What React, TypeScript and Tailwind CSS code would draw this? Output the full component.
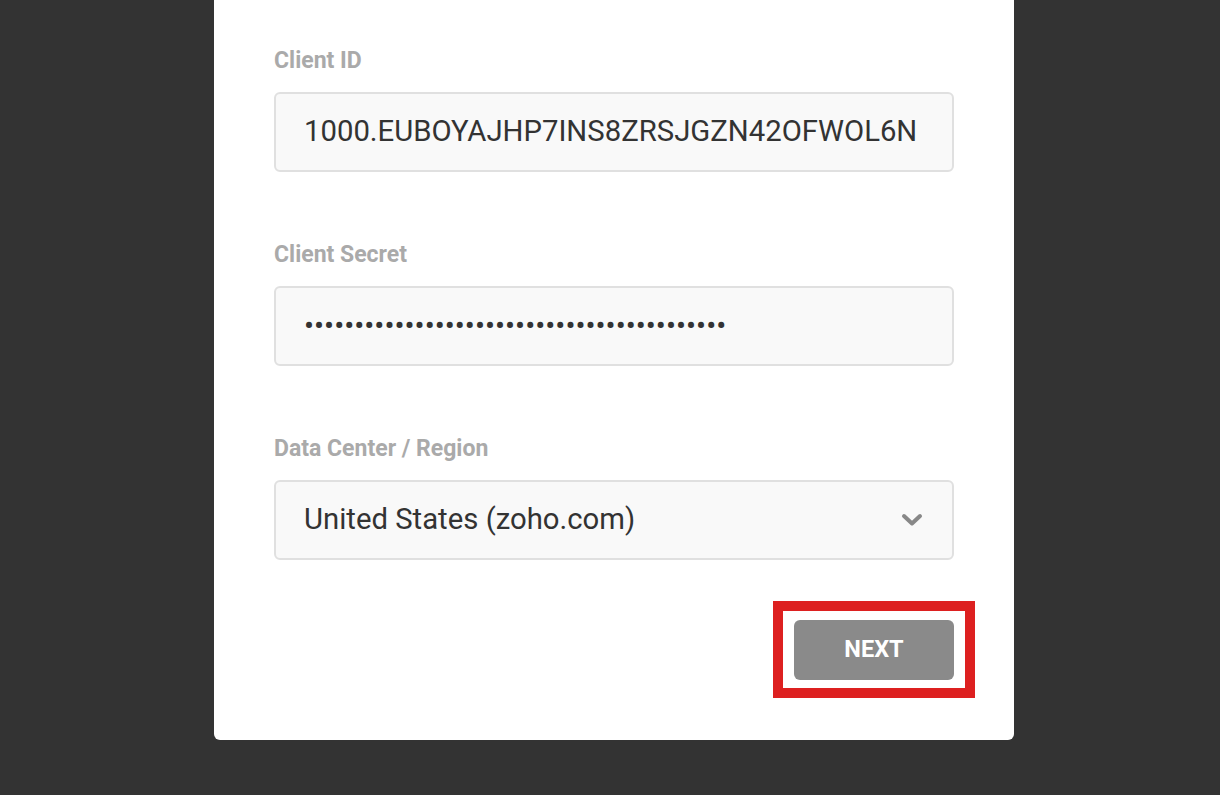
import React from "react";

function Field({ label, children }: { label: string; children: React.ReactNode }) {
  return (
    <div className="flex flex-col">
      <div className="text-[23px] leading-[24px] font-bold text-[#aaaaaa] translate-y-[1px]">{label}</div>
      <div className="mt-[20px] h-[80px] rounded-[6px] border-2 border-[#e0e0e0] bg-[#f9f9f9] flex items-center pl-[28px] pr-[28px] text-[29.3px] text-[#333333]">
        {children}
      </div>
    </div>
  );
}

export default function App() {
  const dots = "•".repeat(42);
  return (
    <div className="w-[1220px] h-[795px] bg-[#333333] overflow-hidden flex" style={{ fontFamily: "Roboto, 'Liberation Sans', sans-serif" }}>
      <div className="ml-[214px] w-[800px] h-[740px] bg-white rounded-b-[6px] px-[60px] pt-[48px] flex flex-col">
        <Field label="Client ID">
          <span>1000.EUBOYAJHP7INS8ZRSJGZN42OFWOL6N</span>
        </Field>
        <div className="h-[70px]" />
        <Field label="Client Secret">
          <span className="text-[29.8px]">{dots}</span>
        </Field>
        <div className="h-[70px]" />
        <Field label="Data Center / Region">
          <div className="flex w-full items-center justify-between">
            <span>United States (zoho.com)</span>
            <svg width="22" height="14" viewBox="0 0 22 14" className="mr-[1px]">
              <path d="M3 3 L11 10.5 L19 3" fill="none" stroke="#888888" strokeWidth="4" strokeLinecap="round" strokeLinejoin="round" />
            </svg>
          </div>
        </Field>
        <div className="flex justify-end mt-[60px]">
          <div className="relative">
            <button className="w-[160px] h-[60px] rounded-[6px] bg-[#8a8a8a] text-white text-[23.5px] font-bold">NEXT</button>
            <div className="absolute left-[-21px] right-[-21px] top-[-19px] bottom-[-18px] border-[10px] border-[#dd2020] pointer-events-none" />
          </div>
        </div>
      </div>
    </div>
  );
}
